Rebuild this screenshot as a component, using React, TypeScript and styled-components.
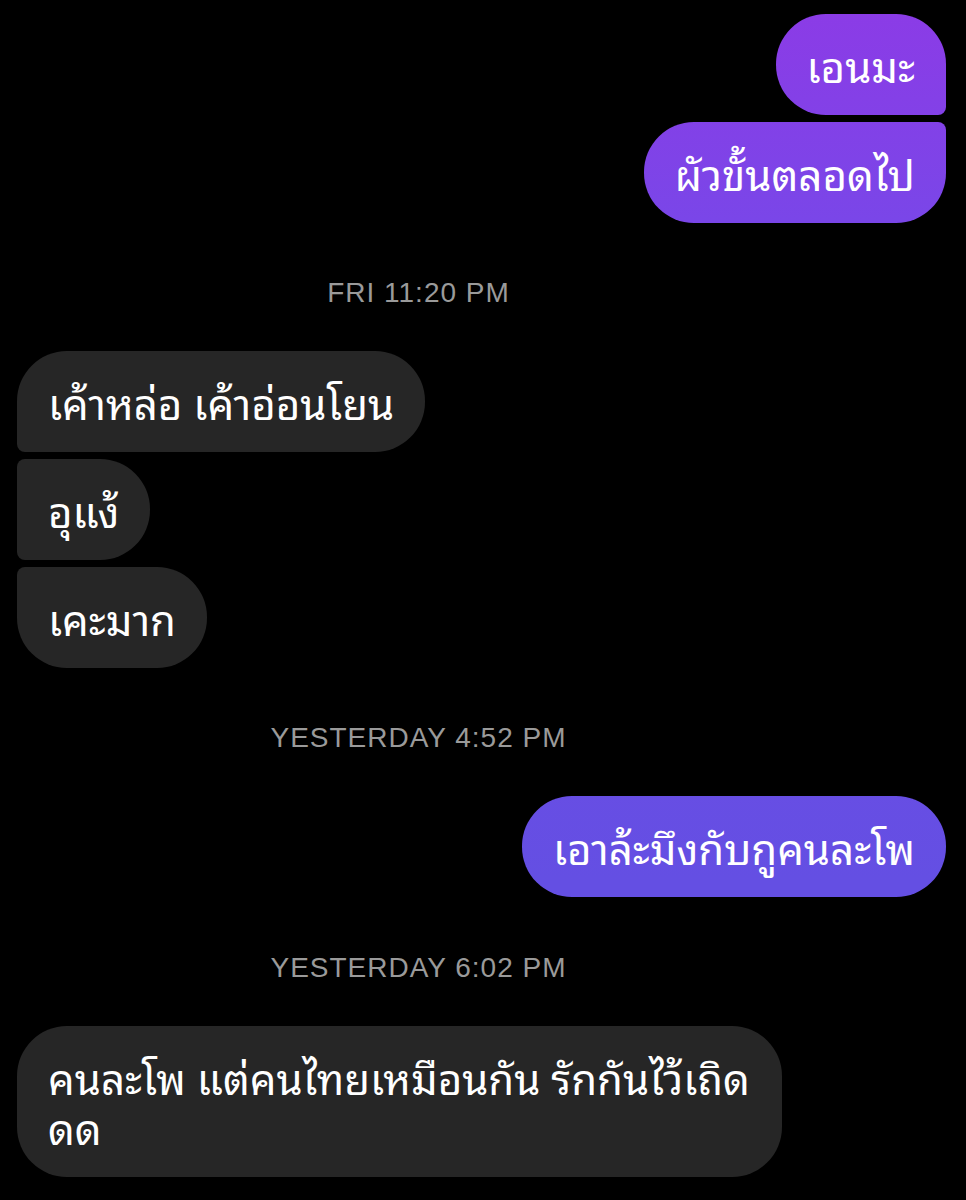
import styled, { createGlobalStyle, css } from "styled-components";

const GlobalStyle = createGlobalStyle`
  html, body {
    margin: 0;
    padding: 0;
    background: #000;
  }
`;

const Screen = styled.div`
  min-height: 1200px;
  background: #000;
  display: flex;
  flex-direction: column;
  padding: 14px 20px 0 17px;
  box-sizing: border-box;
  font-family: "Noto Sans Thai Looped", "Noto Sans Thai", "Thonburi", "Noto Sans", sans-serif;
`;

type Side = "out" | "in";
type Pos = "single" | "first" | "middle" | "last";

const BIG = 50;
const SMALL = 8;

function corners(side: Side, pos: Pos) {
  const top = pos === "middle" || pos === "last" ? SMALL : BIG;
  const bottom = pos === "middle" || pos === "first" ? SMALL : BIG;
  if (side === "out") {
    return css`
      border-radius: ${BIG}px ${top}px ${bottom}px ${BIG}px;
    `;
  }
  return css`
    border-radius: ${top}px ${BIG}px ${BIG}px ${bottom}px;
  `;
}

const Bubble = styled.div<{ $side: Side; $pos: Pos }>`
  align-self: ${(p) => (p.$side === "out" ? "flex-end" : "flex-start")};
  max-width: 765px;
  box-sizing: border-box;
  padding: 25px 31px 26px 31px;
  font-size: 42px;
  line-height: 50px;
  word-break: break-all;
  color: #fff;
  ${(p) => corners(p.$side, p.$pos)}
  ${(p) =>
    p.$side === "out"
      ? css`
          background: linear-gradient(180deg, #8c3be6 0px, #7a46e8 220px, #644fe3 880px);
          background-attachment: fixed;
        `
      : css`
          background: #262626;
        `}
  & + & {
    margin-top: 7px;
  }
`;

const Stamp = styled.div<{ $top: number }>`
  margin: ${(p) => p.$top}px 126px 42px 0;
  text-align: center;
  font-family: "Liberation Sans", Arial, sans-serif;
  font-size: 28px;
  letter-spacing: 1px;
  line-height: 32px;
  color: #9a9a9a;
`;

export default function App() {
  return (
    <>
      <GlobalStyle />
      <Screen>
        <Bubble $side="out" $pos="first">เอนมะ</Bubble>
        <Bubble $side="out" $pos="last">ผัวขั้นตลอดไป</Bubble>

        <Stamp $top={54}>FRI 11:20 PM</Stamp>

        <Bubble $side="in" $pos="first">เค้าหล่อ เค้าอ่อนโยน</Bubble>
        <Bubble $side="in" $pos="middle">อุแง้</Bubble>
        <Bubble $side="in" $pos="last">เคะมาก</Bubble>

        <Stamp $top={54}>YESTERDAY 4:52 PM</Stamp>

        <Bubble $side="out" $pos="single">เอาล้ะมึงกับกูคนละโพ</Bubble>

        <Stamp $top={55}>YESTERDAY 6:02 PM</Stamp>

        <Bubble $side="in" $pos="single">คนละโพ แต่คนไทยเหมือนกัน รักกันไว้เถิดดด</Bubble>
      </Screen>
    </>
  );
}
